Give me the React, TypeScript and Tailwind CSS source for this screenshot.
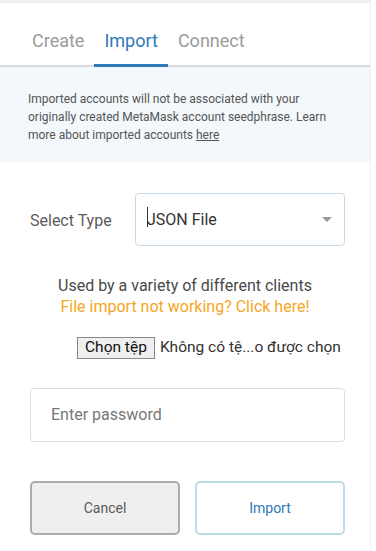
import { useState } from "react";

const tabs = ["Create", "Import", "Connect"];

export default function App() {
  const [active, setActive] = useState("Import");

  return (
    <div
      className="w-[376px] h-[551px] bg-white overflow-hidden"
      style={{ fontFamily: "Roboto, 'Liberation Sans', sans-serif" }}
    >
      <div className="w-[371px] h-full border-r border-[#f2f2f2] border-t-[3px] border-t-[#efefef]">
        {/* Tabs */}
        <div className="flex items-end gap-5 pl-8 h-[64px] border-b-2 border-[#d8dadc]">
          {tabs.map((tab) => (
            <button
              key={tab}
              onClick={() => setActive(tab)}
              className={`relative pb-[15px] text-[18px] leading-none ${
                tab === active ? "text-[#2f79b9]" : "text-[#9b9b9b]"
              }`}
            >
              {tab}
              {tab === active && (
                <span className="absolute -left-[10px] -right-[10px] -bottom-[2px] h-[3px] bg-[#2f79b9]" />
              )}
            </button>
          ))}
        </div>

        {/* Notice */}
        <div className="bg-[#f2f8fb] h-[95px] pl-7 pr-6 pt-[23px] text-[12px] leading-[18px] text-[#555555]">
          Imported accounts will not be associated with your originally created MetaMask account seedphrase. Learn
          more about imported accounts <span className="underline">here</span>
        </div>

        {/* Select type */}
        <div className="flex items-center mt-[31px] pl-[30px]">
          <span className="text-[16px] text-[#5b5b5b] w-[105px] pt-[3px]">Select Type</span>
          <div className="relative flex items-center w-[210px] h-[53px] border border-[#c9dbe7] rounded-[4px] pl-[11px] pr-3">
            <span className="w-px h-[20px] bg-[#333] -mr-[1px] -mt-[6px]" />
            <span className="text-[16px] text-[#333333]">JSON File</span>
            <span className="ml-auto w-0 h-0 border-l-[5px] border-r-[5px] border-t-[5px] border-l-transparent border-r-transparent border-t-[#999999]" />
          </div>
        </div>

        {/* Help */}
        <div className="mt-[29px] text-center text-[16px] leading-[21px]">
          <div className="text-[#4a4a4a]">Used by a variety of different clients</div>
          <div className="text-[#f5a623]">File import not working? Click here!</div>
        </div>

        <div className="flex items-center mt-[19px] pl-[77px] text-[15.5px]">
          <span className="h-[22px] px-[7px] flex items-center bg-[#efefef] border border-[#888888] text-[#111] leading-none">
            Chọn tệp
          </span>
          <span className="ml-[5px] text-[#333]">Không có tệ...o được chọn</span>
        </div>

        {/* Password */}
        <div className="mt-[29px] mx-[30px] w-[315px] h-[54px] border border-[#dcdcdc] rounded-[4px] flex items-center pl-5 text-[16px] text-[#777777]">
          Enter password
        </div>

        {/* Buttons */}
        <div className="flex gap-[15px] mt-[39px] pl-[30px]">
          <button className="w-[150px] h-[54px] bg-[#efefef] border-2 border-[#acacac] rounded-[5px] text-[14px] text-[#5b5b5b]">
            Cancel
          </button>
          <button className="w-[150px] h-[54px] bg-white border-2 border-[#bcdbe4] rounded-[5px] text-[14px] text-[#2f79b9]">
            Import
          </button>
        </div>
      </div>
    </div>
  );
}
